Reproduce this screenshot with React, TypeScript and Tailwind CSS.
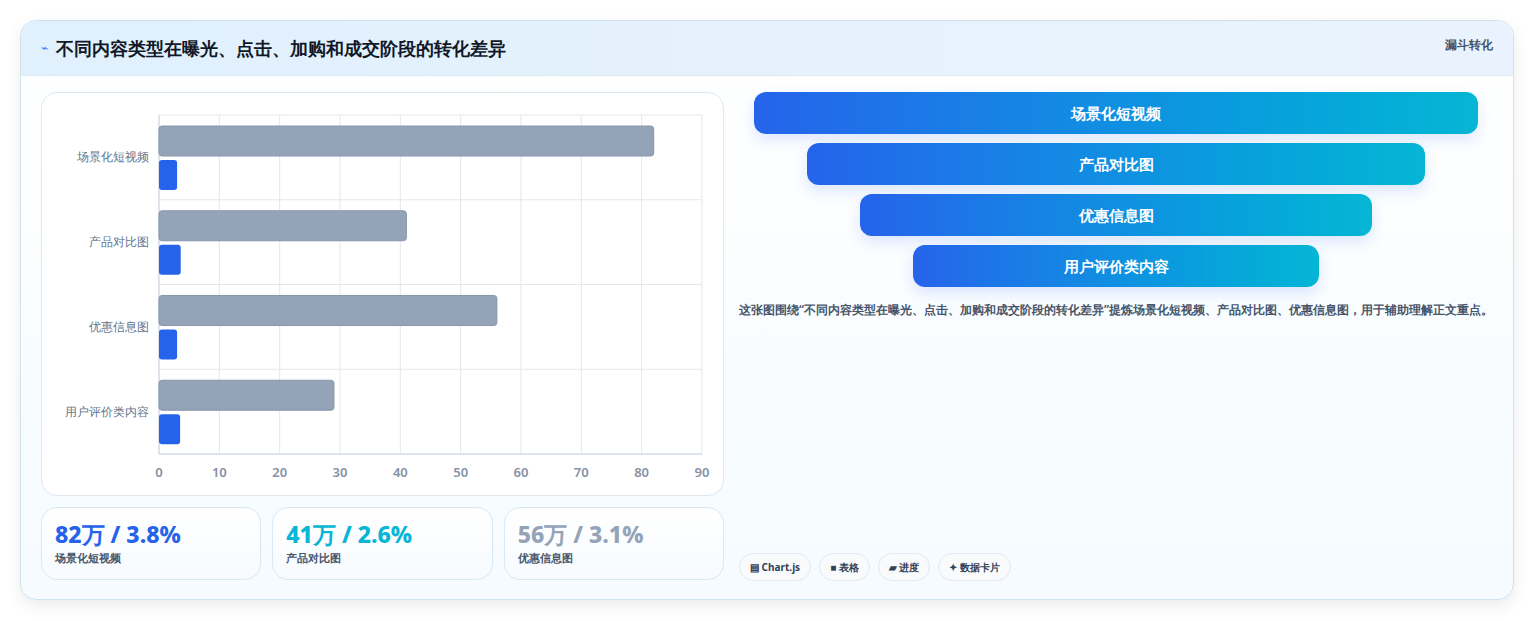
const rows = [
  { label: "场景化短视频", a: 82, b: 3 },
  { label: "产品对比图", a: 41, b: 3.6 },
  { label: "优惠信息图", a: 56, b: 3 },
  { label: "用户评价类内容", a: 29, b: 3.5 },
];

const funnel = ["场景化短视频", "产品对比图", "优惠信息图", "用户评价类内容"];
const insets = ["mx-[15px]", "mx-[68px]", "mx-[121px]", "mx-[174px]"];

function Chart() {
  const x0 = 117;
  const x1 = 660;
  const y0 = 22;
  const y1 = 361;
  const step = (x1 - x0) / 90;
  const band = (y1 - y0) / 4;
  return (
    <svg width="683" height="403" className="block">
      {Array.from({ length: 10 }).map((_, i) => (
        <line key={i} x1={x0 + i * 60.33} x2={x0 + i * 60.33} y1={y0} y2={y1} stroke="#e5e7eb" />
      ))}
      {[0, 1, 2, 3, 4].map((i) => (
        <line key={i} x1={x0} x2={x1} y1={y0 + i * band} y2={y0 + i * band} stroke="#e5e7eb" />
      ))}
      <line x1={x0} x2={x1} y1={y1} y2={y1} stroke="#cbd5e1" />
      <line x1={x0} x2={x0} y1={y0} y2={y1} stroke="#cbd5e1" />
      {rows.map((r, i) => {
        const top = y0 + i * band;
        return (
          <g key={r.label}>
            <rect x={x0} y={top + 11} width={r.a * step} height={30} rx={3} fill="#94a3b8" stroke="#8796ac" />
            <rect x={x0} y={top + 45} width={r.b * step} height={30} rx={3} fill="#2563eb" />
            <text x={x0 - 10} y={top + band / 2 + 4} textAnchor="end" fontSize="12" fill="#64748b">
              {r.label}
            </text>
          </g>
        );
      })}
      {Array.from({ length: 10 }).map((_, i) => (
        <text key={i} x={x0 + i * 60.33} y={y1 + 23} textAnchor="middle" fontSize="13" fontWeight="600" fill="#8492a6">
          {i * 10}
        </text>
      ))}
    </svg>
  );
}

export default function App() {
  return (
    <div className="min-h-[621px] bg-white pt-5 px-5 font-['Noto_Sans','Noto_Sans_CJK_SC',sans-serif]">
      <div className="h-[580px] rounded-2xl border border-[#cfe3ee] bg-gradient-to-b from-white to-[#f5fbff] shadow-[0_6px_16px_rgba(0,0,0,0.08)] overflow-hidden flex flex-col">
        <div className="h-[55px] shrink-0 flex items-center justify-between px-5 bg-gradient-to-r from-[#e0f0fd] to-[#eaf3fd] border-b border-[#dbeaf5]">
          <div className="flex items-center gap-2">
            <span className="text-[#3b82f6] text-xs">⌁</span>
            <h1 className="text-[18px] font-bold text-[#111827]">不同内容类型在曝光、点击、加购和成交阶段的转化差异</h1>
          </div>
          <span className="self-start mt-4 text-xs font-bold text-[#475569]">漏斗转化</span>
        </div>
        <div className="flex gap-[15px] px-5 pt-4 flex-1">
          <div className="w-[683px] shrink-0 flex flex-col gap-[11px]">
            <div className="h-[404px] rounded-2xl border border-[#e2e8f0] bg-white">
              <Chart />
            </div>
            <div className="grid grid-cols-3 gap-[11px]">
              {[
                ["82万 / 3.8%", "text-[#2563eb]", "场景化短视频"],
                ["41万 / 2.6%", "text-[#06b6d4]", "产品对比图"],
                ["56万 / 3.1%", "text-[#94a3b8]", "优惠信息图"],
              ].map(([v, c, l]) => (
                <div key={l} className="h-[73px] rounded-2xl border border-[#d9e8f5] bg-gradient-to-b from-white to-[#f7fbff] px-[13px] pt-3">
                  <div className={`text-[23px] leading-7 font-extrabold ${c}`}>{v}</div>
                  <div className="text-[11px] text-[#475569] font-semibold mt-0.5">{l}</div>
                </div>
              ))}
            </div>
          </div>
          <div className="flex-1 flex flex-col">
            <div className="flex flex-col gap-[9px]">
              {funnel.map((f, i) => (
                <div
                  key={f}
                  className={`${insets[i]} h-[42px] rounded-xl bg-gradient-to-r from-[#2563eb] to-[#06b6d4] flex items-center justify-center text-white font-bold text-[15px] shadow-[0_6px_14px_rgba(37,99,235,0.15)]`}
                >
                  {f}
                </div>
              ))}
            </div>
            <p className="mt-3 text-xs font-semibold leading-[21px] text-[#475569]">
              这张图围绕“不同内容类型在曝光、点击、加购和成交阶段的转化差异”提炼场景化短视频、产品对比图、优惠信息图，用于辅助理解正文重点。
            </p>
            <div className="mt-auto mb-[18px] flex gap-2">
              {["▤ Chart.js", "■ 表格", "▰ 进度", "✦ 数据卡片"].map((t) => (
                <span key={t} className="h-7 px-2.5 flex items-center rounded-full border border-[#e2e8f0] bg-[#f8fafc] text-[10px] font-bold text-[#334155]">
                  {t}
                </span>
              ))}
            </div>
          </div>
        </div>
      </div>
    </div>
  );
}
